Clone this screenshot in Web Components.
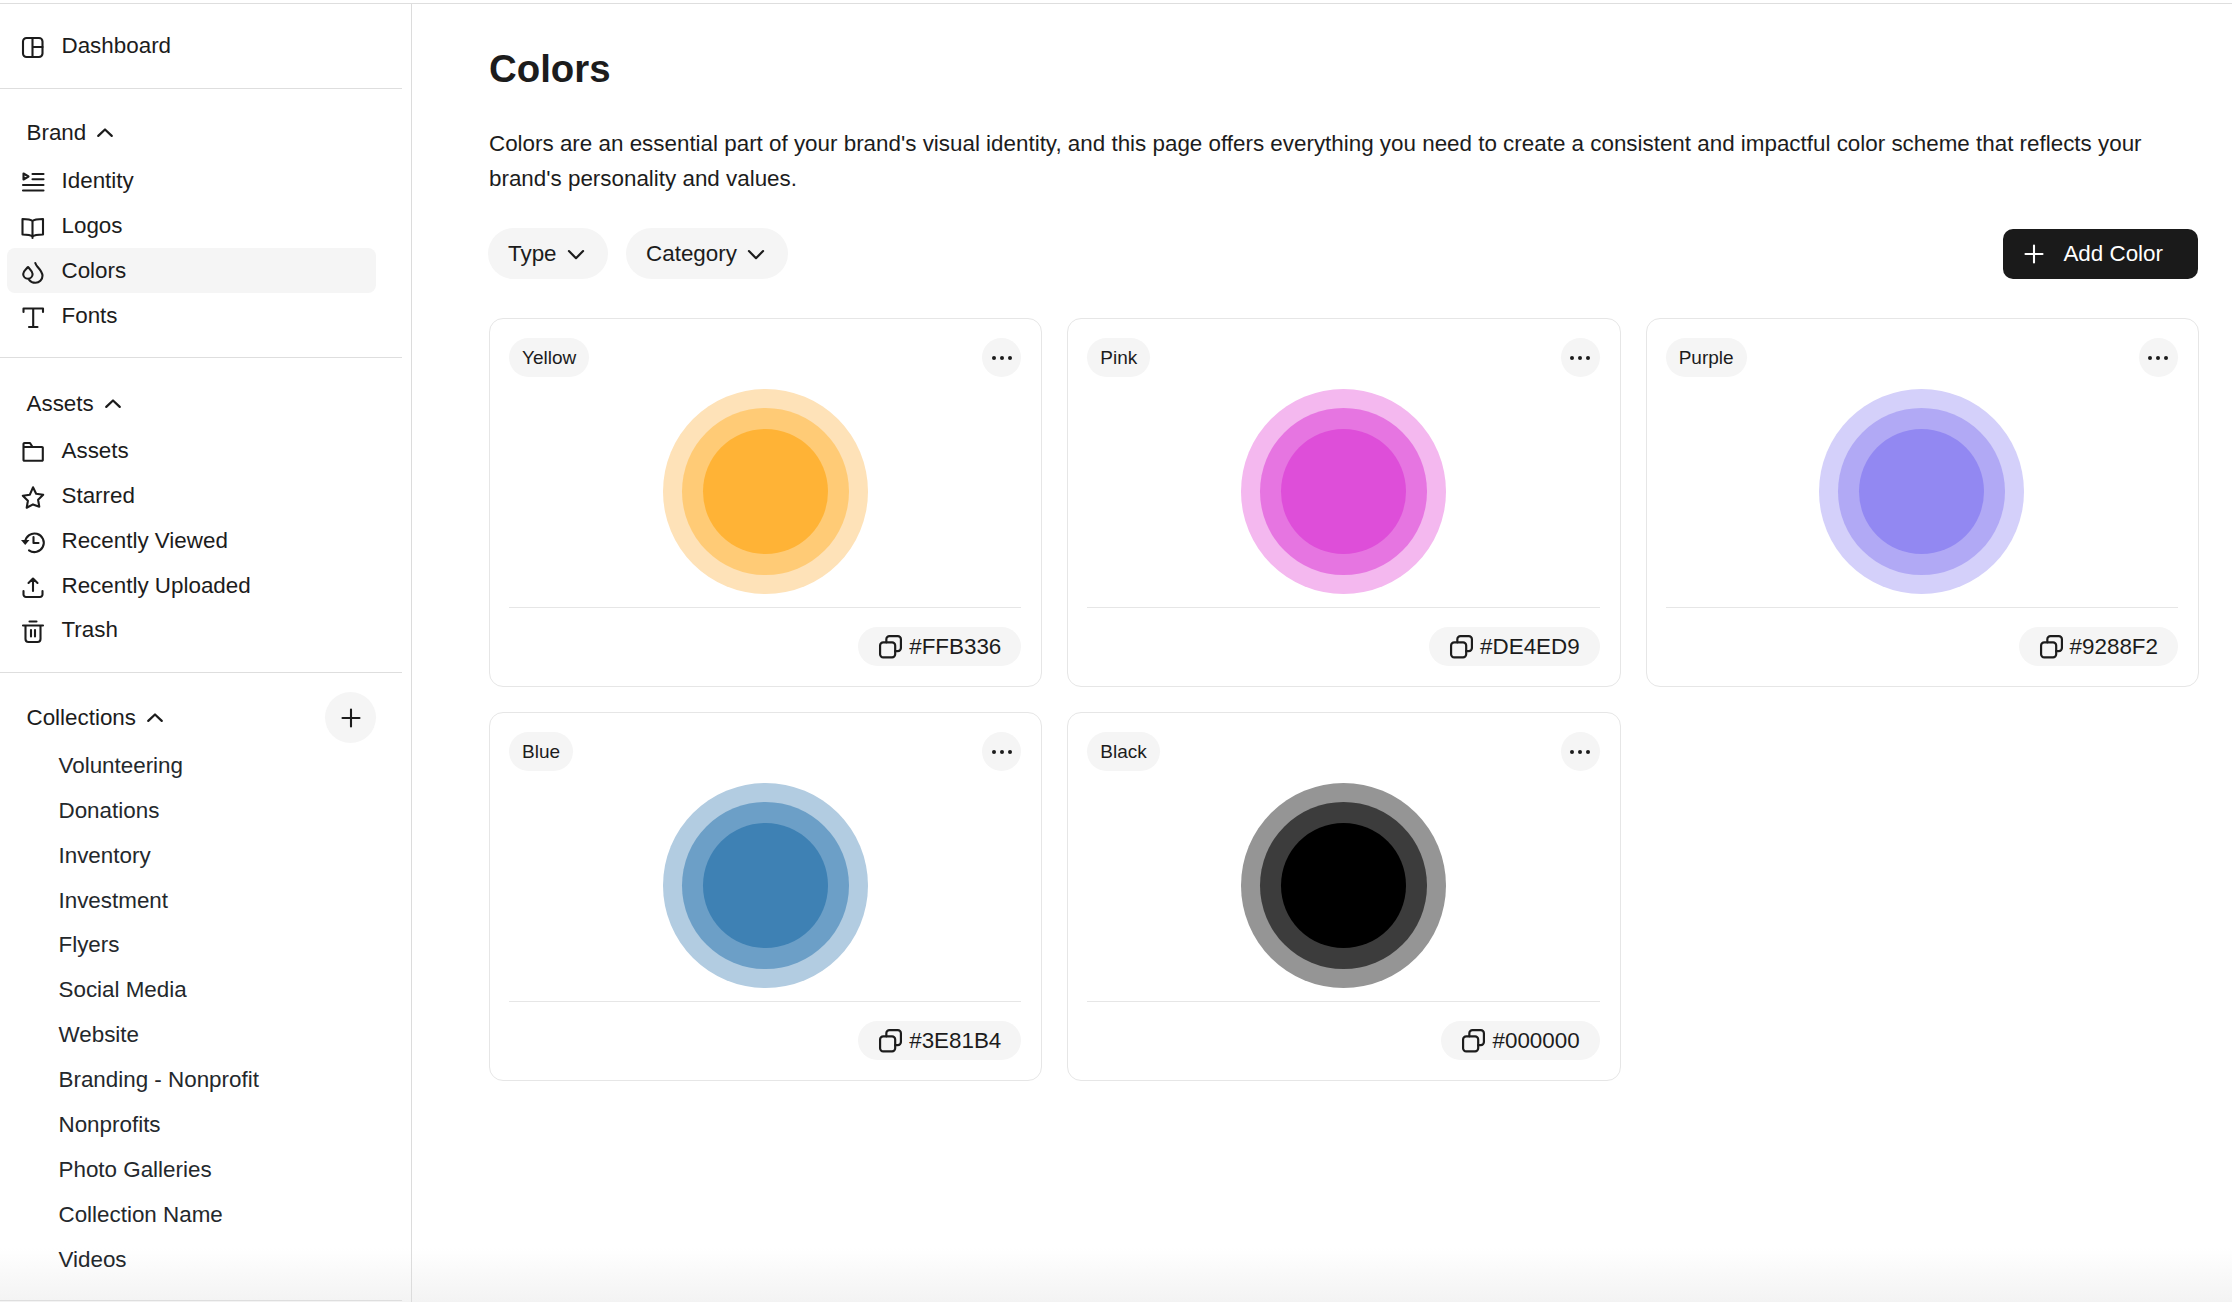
<!DOCTYPE html>
<html>
<head>
<meta charset="utf-8">
<title>Colors</title>
<style>
    html, body {
        margin: 0;
        height: 100%;
        overflow: hidden;
        background: #fff;
        color: #1c1c1c;
        font-family: "Liberation Sans", Arial, sans-serif;
        font-size: 22.4px;
    }
</style>
</head>
<body>
<brand-app>
    <side-bar slot="side">
        <nav-group style="--top: 19.5px; --bottom: 19.5px">
            <nav-item icon="dashboard">Dashboard</nav-item>
        </nav-group>
        <nav-group label="Brand" style="--top: 22px; --gap: 2.5px; --bottom: 19px">
            <nav-item icon="identity">Identity</nav-item>
            <nav-item icon="logos">Logos</nav-item>
            <nav-item icon="colors" active>Colors</nav-item>
            <nav-item icon="fonts">Fonts</nav-item>
        </nav-group>
        <nav-group label="Assets" style="--top: 23.5px; --gap: 2px; --bottom: 19px">
            <nav-item icon="folder">Assets</nav-item>
            <nav-item icon="star">Starred</nav-item>
            <nav-item icon="history">Recently Viewed</nav-item>
            <nav-item icon="upload">Recently Uploaded</nav-item>
            <nav-item icon="trash">Trash</nav-item>
        </nav-group>
        <nav-group label="Collections" addable style="--top: 22.5px; --gap: 3px; --bottom: 17.5px">
            <nav-item>Volunteering</nav-item>
            <nav-item>Donations</nav-item>
            <nav-item>Inventory</nav-item>
            <nav-item>Investment</nav-item>
            <nav-item>Flyers</nav-item>
            <nav-item>Social Media</nav-item>
            <nav-item>Website</nav-item>
            <nav-item>Branding - Nonprofit</nav-item>
            <nav-item>Nonprofits</nav-item>
            <nav-item>Photo Galleries</nav-item>
            <nav-item>Collection Name</nav-item>
            <nav-item>Videos</nav-item>
        </nav-group>
    </side-bar>
    <colors-page>
        <color-card name="Yellow" hex="#FFB336" outer="#FEE2B8" middle="#FFCB76"></color-card>
        <color-card name="Pink" hex="#DE4ED9" outer="#F4B8EF" middle="#E675E1"></color-card>
        <color-card name="Purple" hex="#9288F2" outer="#D4D0FA" middle="#B1A9F5"></color-card>
        <color-card name="Blue" hex="#3E81B4" outer="#B2CCE1" middle="#6C9FC7"></color-card>
        <color-card name="Black" hex="#000000" outer="#959595" middle="#3C3C3C"></color-card>
    </colors-page>
</brand-app>

<script>
const ICONS = {
    dashboard: '<rect x="2" y="2.500" width="19.500" height="19" rx="3.500"/><path d="M11.500 2.500v19M11.500 11.500h10"/>',
    identity: '<path d="M2.500 3 7.500 6 2.500 9z"/><path d="M11.500 3.500h11M11.500 8.800h11M2 14.500h20.500M2 20h20.500"/>',
    logos: '<path d="M11.500 5.500C9.500 3.800 7 3.500 1.500 3.500V19c5.500 0 8 .3 10 2 2-1.700 4.500-2 10.500-2V3.500c-6 0-8.500.3-10.500 2zM11.500 5.500V22.500"/>',
    colors: '<path d="M7 6.500C5 9 2.200 10.500 2.200 13.500a4.700 4.700 0 0 0 9.400 0C11.600 10.500 9 9 7 6.500z"/><path d="M14.300 2.500c.4 1.300 1.200 2.600 2.200 3.800 2.500 2.800 5 5.600 5 9a7 7 0 0 1-7.200 7c-2.500 0-4.800-1.200-6.200-3"/>',
    fonts: '<path d="M2.500 6.500V3h19.500v3.500M12.200 3v18.500M8 21.500h8.500"/>',
    folder: '<path d="M2.500 19.500V3.500a1 1 0 0 1 1-1h5.500l2.500 4h9.500a.8.8 0 0 1 .8.8v12.200a.8.8 0 0 1-.8.8H3.300a.8.8 0 0 1-.8-.8zM2.500 6.500h9"/>',
    star: '<path d="M12 1.800l3.150 6.400 7.050 1.030-5.100 4.970 1.200 7.020L12 18.900l-6.300 3.320 1.200-7.020-5.100-4.970 7.050-1.030z"/>',
    history: '<path d="M4.200 11.500A9.300 9.300 0 1 1 8 19.800"/><path d="M0 9.500h8.500L4.200 14.500z" fill="currentColor" stroke="none"/><path d="M12.500 6.500v6h5"/>',
    upload: '<path d="M12 15.500V3M7.500 7.500 12 3l4.500 4.500M2.500 15.500V19a2.500 2.500 0 0 0 2.500 2.500h14a2.500 2.500 0 0 0 2.500-2.500v-3.500"/>',
    trash: '<path d="M2 6h20M8.500 2h7M4.500 6v13.500a3 3 0 0 0 3 3h9a3 3 0 0 0 3-3V6M10 10.500v6.500M14 10.500v6.500"/>',
    copy: '<rect x="2" y="8" width="14.500" height="14.500" rx="3"/><path d="M8 8V5a3 3 0 0 1 3-3h8a3 3 0 0 1 3 3v8.500a3 3 0 0 1-3 3h-2.500"/>',
    plus: '<path d="M12 3.500v17M3.500 12h17"/>',
    up: '<path d="M3 14.500l9-8.500 9 8.500"/>',
    down: '<path d="M3.500 8.500 12 17l8.500-8.500"/>'
};

function icon(name, size = 24, extra = '', stroke = 2.1) {
    return `<svg width="${size}" height="${size}" viewBox="0 0 24 24" fill="none" stroke="currentColor"
        stroke-width="${stroke}" stroke-linecap="round" stroke-linejoin="round" style="overflow: visible; flex: none; ${extra}">${ICONS[name]}</svg>`;
}

class BaseElement extends HTMLElement {
    constructor() {
        super();
        this.attachShadow({mode: 'open'});
    }

    connectedCallback() {
        this.shadowRoot.innerHTML = `<style>${this.css()}</style>${this.html()}`;
    }
}

class BrandApp extends BaseElement {
    html() {
        return `
            <div id="fade"></div>
            <div id="frame">
                <slot name="side"></slot>
                <slot></slot>
            </div>
        `;
    }

    css() {
        return `
            :host {
                display: block;
                height: 100vh;
                padding-top: 3px;
                box-sizing: border-box;
                position: relative;
                overflow: hidden;
            }
            #frame {
                display: flex;
                position: relative;
                height: 100%;
                border-top: 1px solid #dedede;
                box-sizing: border-box;
            }
            #fade {
                position: absolute;
                left: 0;
                right: 0;
                bottom: 0;
                height: 54px;
                background: linear-gradient(rgba(240, 240, 240, 0), rgba(240, 240, 240, .8));
                pointer-events: none;
            }
        `;
    }
}

class SideBar extends BaseElement {
    html() {
        return `<slot></slot>`;
    }

    css() {
        return `
            :host {
                display: block;
                flex: none;
                width: 412px;
                box-sizing: border-box;
                border-right: 1.5px solid #dcdcdc;
                overflow: hidden;
            }
        `;
    }
}

class NavGroup extends BaseElement {
    html() {
        const label = this.getAttribute('label');
        const add = this.hasAttribute('addable') ? `<button>${icon('plus', 24)}</button>` : '';
        const head = label ? `<div id="head"><span>${label}</span>${icon('up', 18, '', 3)}${add}</div>` : '';
        return `${head}<div id="items"><slot></slot></div>`;
    }

    css() {
        return `
            :host {
                display: block;
                width: 402px;
                padding: var(--top, 20px) 0 var(--bottom, 20px);
                border-bottom: 1px solid #dedede;
            }
            #head {
                display: flex;
                align-items: center;
                gap: 10px;
                height: 45px;
                padding: 0 26px 0 26.500px;
                margin-bottom: var(--gap, 0);
            }
            #head svg {
                transform: translateY(1px);
            }
            button {
                display: flex;
                align-items: center;
                justify-content: center;
                width: 51px;
                height: 51px;
                margin: -3px 0 -3px auto;
                padding: 0;
                border: none;
                border-radius: 50%;
                background: #f5f5f5;
                color: #1c1c1c;
            }
            button svg {
                transform: none !important;
            }
        `;
    }
}

class NavItem extends BaseElement {
    html() {
        const name = this.getAttribute('icon');
        return `${name ? icon(name, 24, 'transform: translateY(1.500px);') : ''}<slot></slot>`;
    }

    css() {
        const plain = !this.hasAttribute('icon');
        return `
            :host {
                display: flex;
                align-items: center;
                gap: 16.500px;
                height: 44.900px;
                margin: 0 26px 0 7px;
                padding-left: ${plain ? 51.500 : 14}px;
                border-radius: 8px;
                color: ${plain ? '#24282c' : '#1c1c1c'};
            }
            :host([active]) {
                background: #f5f5f5;
            }
        `;
    }
}

class FilterPill extends BaseElement {
    html() {
        return `<slot></slot>${icon('down', 20, '', 2.6)}`;
    }

    css() {
        return `
            :host {
                display: inline-flex;
                align-items: center;
                gap: 9px;
                height: 51px;
                padding: 0 22.500px 0 20px;
                border-radius: 26px;
                background: #f5f5f5;
            }
        `;
    }
}

class ColorsPage extends BaseElement {
    html() {
        return `
            <h1>Colors</h1>
            <p>Colors are an essential part of your brand's visual identity, and this page offers everything you need to create a consistent and impactful color scheme that reflects your brand's personality and values.</p>
            <div id="filters">
                <filter-pill>Type</filter-pill>
                <filter-pill>Category</filter-pill>
                <button>${icon('plus', 24)}<span>Add Color</span></button>
            </div>
            <div id="grid"><slot></slot></div>
        `;
    }

    css() {
        return `
            :host {
                display: block;
                flex: 1;
                min-width: 0;
                padding: 43px 34px 0 77px;
            }
            h1 {
                margin: 0;
                font-size: 38.400px;
                line-height: 44px;
                font-weight: 700;
                color: #1c1c1c;
            }
            p {
                margin: 35px 0 0;
                line-height: 35px;
            }
            #filters {
                display: flex;
                align-items: center;
                gap: 18px;
                margin: 32px 0 0 -1px;
            }
            button {
                display: flex;
                align-items: center;
                gap: 17px;
                height: 50px;
                margin-left: auto;
                padding: 0 35px 0 19px;
                border: none;
                border-radius: 10px;
                background: #1a1a1a;
                color: #fff;
                font: inherit;
            }
            #grid {
                display: grid;
                grid-template-columns: repeat(3, 1fr);
                gap: 25px;
                margin: 39px -1px 0 0;
            }
        `;
    }
}

class ColorCard extends BaseElement {
    html() {
        const get = (n) => this.getAttribute(n);
        return `
            <div id="top">
                <span class="pill tag">${get('name')}</span>
                <span class="pill dots"><i></i><i></i><i></i></span>
            </div>
            <div id="swatch" style="background: ${get('outer')}">
                <div style="background: ${get('middle')}">
                    <div style="background: ${get('hex')}"></div>
                </div>
            </div>
            <div id="bottom">
                <span class="pill hex">${icon('copy', 25)}${get('hex')}</span>
            </div>
        `;
    }

    css() {
        return `
            :host {
                display: block;
                height: 369px;
                box-sizing: border-box;
                padding: 19px 20px 0 19px;
                border: 1px solid #e6e6e6;
                border-radius: 14px;
            }
            #top {
                display: flex;
                justify-content: space-between;
            }
            .pill {
                display: flex;
                align-items: center;
                height: 39px;
                border-radius: 20px;
                background: #f5f5f5;
            }
            .tag {
                padding: 0 13px;
                font-size: 19px;
            }
            .dots {
                justify-content: center;
                gap: 4px;
                width: 39px;
            }
            .dots i {
                width: 4px;
                height: 4px;
                border-radius: 50%;
                background: #1c1c1c;
            }
            #swatch {
                display: flex;
                align-items: center;
                justify-content: center;
                width: 205px;
                height: 205px;
                margin: 12px auto 0;
                border-radius: 50%;
            }
            #swatch > div {
                display: flex;
                align-items: center;
                justify-content: center;
                width: 167px;
                height: 167px;
                border-radius: 50%;
            }
            #swatch > div > div {
                width: 125px;
                height: 125px;
                border-radius: 50%;
            }
            #bottom {
                display: flex;
                justify-content: flex-end;
                margin-top: 13px;
                padding-top: 19px;
                border-top: 1px solid #e6e6e6;
            }
            .hex {
                gap: 6px;
                padding: 0 20px;
            }
        `;
    }
}

customElements.define('brand-app', BrandApp);
customElements.define('side-bar', SideBar);
customElements.define('nav-group', NavGroup);
customElements.define('nav-item', NavItem);
customElements.define('filter-pill', FilterPill);
customElements.define('colors-page', ColorsPage);
customElements.define('color-card', ColorCard);
</script>
</body>
</html>
